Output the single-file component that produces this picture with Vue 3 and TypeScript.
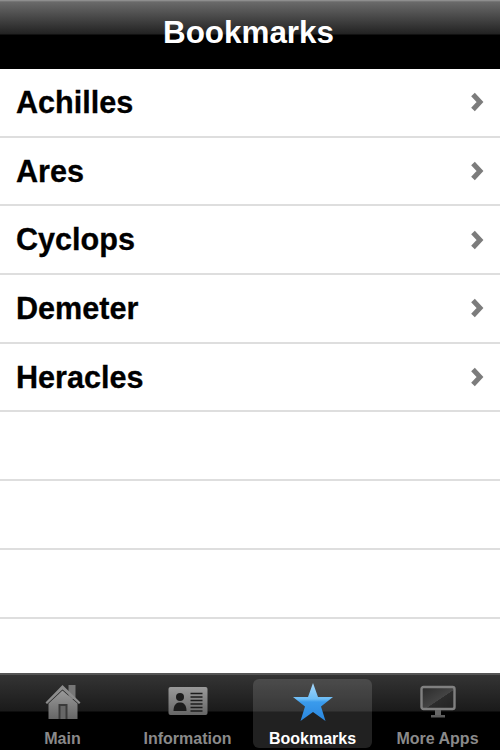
<script setup lang="ts">
const names: string[] = ['Achilles', 'Ares', 'Cyclops', 'Demeter', 'Heracles']
const blanks: number[] = [1, 2, 3, 4]
</script>

<template>
  <div class="app">
    <header class="nav">Bookmarks</header>
    <main class="list">
      <div v-for="n in names" :key="n" class="row">
        <span class="name">{{ n }}</span>
        <svg class="chev" width="16" height="22" viewBox="0 0 16 22">
          <path d="M3 3.5 L10 11 L3 18.5" fill="none" stroke="#7c7c7c" stroke-width="5" stroke-linejoin="miter" />
        </svg>
      </div>
      <div v-for="b in blanks" :key="b" class="row"></div>
    </main>
    <nav class="tabs">
      <div class="tab">
        <svg width="40" height="38" viewBox="0 0 40 38">
          <defs>
            <linearGradient id="g1" x1="0" y1="0" x2="0" y2="1">
              <stop offset="0" stop-color="#9a9a9a" />
              <stop offset="1" stop-color="#666" />
            </linearGradient>
          </defs>
          <path d="M25.5 2 h7 v14 h-7z" fill="#777" />
          <path d="M19.5 2 L37.5 19.5 L36 21 L19.5 6.5 L4 21 L2.5 19.5 Z" fill="#8c8c8c" />
          <path d="M19.5 7.5 L34.5 20.5 V36 H5.5 V20.5 Z" fill="url(#g1)" />
          <path d="M15.5 21 h9 v15 h-9z" fill="#3a3a3a" />
          <path d="M17.5 23 h5 v13 h-5z" fill="#666" />
        </svg>
        <span>Main</span>
      </div>
      <div class="tab">
        <svg width="40" height="38" viewBox="0 0 40 38">
          <rect x="0.5" y="4" width="39" height="28" rx="2" fill="url(#g1)" />
          <circle cx="12" cy="14" r="4" fill="#1c1c1c" />
          <path d="M5.5 28 C5.5 21 9 19.5 12 19.5 C15 19.5 18.5 21 18.5 28 Z" fill="#1c1c1c" />
          <path d="M22.5 10.5 h12 M22.5 14 h12 M22.5 17.5 h12 M22.5 21 h12 M22.5 24.5 h12 M22.5 28 h12" stroke="#1c1c1c" stroke-width="1.7" />
        </svg>
        <span>Information</span>
      </div>
      <div class="tab active">
        <svg width="42" height="38" viewBox="0 0 42 38">
          <defs>
            <linearGradient id="g2" x1="0" y1="0" x2="0" y2="1">
              <stop offset="0" stop-color="#a8d8fa" />
              <stop offset="0.42" stop-color="#6cbcf5" />
              <stop offset="0.5" stop-color="#3a9bec" />
              <stop offset="1" stop-color="#2a86de" />
            </linearGradient>
          </defs>
          <path d="M21 0 L26 14 L41 14 L29 23.5 L33.5 38 L21 29 L8.5 38 L13 23.5 L1 14 L16 14 Z" fill="url(#g2)" />
        </svg>
        <span>Bookmarks</span>
      </div>
      <div class="tab">
        <svg width="40" height="38" viewBox="0 0 40 38">
          <defs>
            <linearGradient id="g3" x1="0" y1="0" x2="1" y2="1">
              <stop offset="0" stop-color="#2a2a2a" />
              <stop offset="0.55" stop-color="#444" />
              <stop offset="0.56" stop-color="#2c2c2c" />
              <stop offset="1" stop-color="#222" />
            </linearGradient>
          </defs>
          <rect x="3.5" y="4" width="33" height="22" rx="2" fill="url(#g3)" stroke="#808080" stroke-width="2.4" />
          <path d="M17 27 h6 v5 h-6z" fill="#666" />
          <path d="M13 32 h14 v2.5 h-14z" fill="#5c5c5c" />
        </svg>
        <span>More Apps</span>
      </div>
    </nav>
  </div>
</template>

<style scoped>
.app {
  width: 500px;
  height: 750px;
  display: flex;
  flex-direction: column;
  overflow: hidden;
  font-family: "Liberation Sans", Arial, sans-serif;
  background: #fff;
}
.nav {
  height: 69px;
  flex: none;
  display: flex;
  justify-content: center;
  padding: 15px 3px 0 0;
  box-sizing: border-box;
  font-size: 31.4px;
  line-height: 36px;
  font-weight: 700;
  color: #fff;
  background: linear-gradient(#9a9a9a 0, #6a6a6a 2px, #222 34px, #000 35px, #000 100%);
}
.list {
  flex: 1;
  min-height: 0;
  overflow: hidden;
}
.row {
  height: 68.7px;
  box-sizing: border-box;
  border-bottom: 2px solid #dedede;
  display: flex;
  align-items: center;
  justify-content: space-between;
  padding: 0 14px 0 16px;
  font-size: 30.6px;
  font-weight: 700;
  color: #000;
}
.name {
  -webkit-text-stroke: 0.3px #000;
}
.tabs {
  height: 77px;
  flex: none;
  box-sizing: border-box;
  display: grid;
  grid-template-columns: 125px 125px 125px 125px;
  padding: 4px 0 2px;
  border-top: 2px solid #555;
  background: linear-gradient(#343434 0, #1a1a1a 36px, #000 37px, #000 100%);
}
.tab {
  display: flex;
  flex-direction: column;
  align-items: center;
  justify-content: space-between;
  margin: 0 3px;
  padding-top: 4px;
  border-radius: 6px;
  font-size: 16px;
  line-height: 19px;
  font-weight: 700;
  color: #8a8a8a;
}
.active {
  color: #fff;
  background: rgba(255, 255, 255, 0.13);
}
</style>
